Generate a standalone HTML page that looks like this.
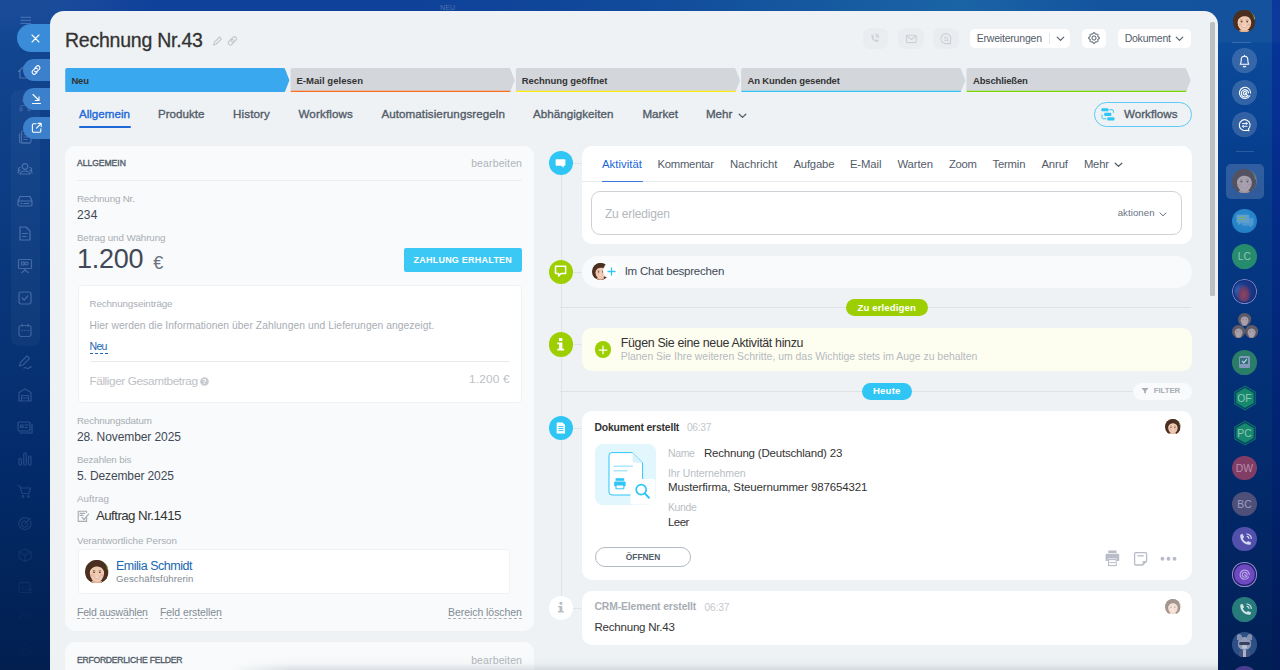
<!DOCTYPE html>
<html lang="de">
<head>
<meta charset="utf-8">
<title>Rechnung Nr.43</title>
<style>
*{box-sizing:border-box;margin:0;padding:0}
html,body{width:1280px;height:670px;overflow:hidden}
body{position:relative;font-family:"Liberation Sans",sans-serif;
 background:
  linear-gradient(180deg,#10409a 0%,#0d3a8e 30%,#08307c 60%,#05286c 100%);}
.abs{position:absolute}
.t{position:absolute;white-space:nowrap}
.lbar{position:absolute;left:0;top:0;width:50px;height:670px;background:linear-gradient(180deg,#1a4c9b 0%,#11458f 8%,#0b3a80 34%,#032b6a 69%,#022256 92%,#021f50 100%)}
.lgroup{position:absolute;left:11.2px;top:90.3px;width:28.6px;height:256px;border-radius:8px;background:rgba(255,255,255,.035)}
.sbtn{position:absolute;border-radius:14px 0 0 14px}
.lic{position:absolute;left:0;top:0}
.topstrip{position:absolute;left:0;top:0;width:1280px;height:26px;background:linear-gradient(90deg,#1a4c9b 0px,#1a4c9b 50px,#10419a 150px,#0f4199 420px,#114a9b 640px,#175ca1 860px,#1a64a5 960px,#14549f 1100px,#14529e 1218px,#14529e 1280px)}
.panel{position:absolute;left:50px;top:11px;width:1168px;height:659px;background:#eef2f4;border-radius:14px 14px 0 0}
.scroll{position:absolute;left:1210px;top:21.5px;width:4.7px;height:274.8px;background:#bdbfc1;border-radius:1.5px}
.scrolltrack{display:none}
.hbtn{position:absolute;top:28.5px;height:19.5px;background:#fff;border-radius:5px}
.hicon{position:absolute;top:27.8px;height:21px;width:25.4px;background:#eaedf0;border-radius:7px}
.stage{position:absolute;top:68px;height:24px}
.stage svg{display:block}
.card{position:absolute;background:#f8fafb;border-radius:10px}
.wcard{position:absolute;background:#fff;border-radius:10px}
.hr{position:absolute;height:1px;background:#e4e8eb}
.circle{position:absolute;width:24.6px;height:24.6px;border-radius:50%}
.dash{position:absolute;height:0;border-top:1px dashed #a9aeb5}
.face{position:absolute;border-radius:50%;overflow:hidden;background:#3a2418}
.rbar{position:absolute;left:1218px;top:0;width:62px;height:670px;background:linear-gradient(180deg,#14529e 0px,#14529e 42px,#0c4a9a 43px,#073f8f 150px,#053782 260px,#032f74 400px,#022766 520px,#021f54 670px)}
.rstrip{position:absolute;left:1271.5px;top:0;width:8.5px;height:670px;background:linear-gradient(180deg,rgba(0,20,150,.42),rgba(0,15,125,.34) 50%,rgba(0,10,90,.22))}
.rc{position:absolute;left:1232.2px;width:24.6px;height:24.6px;border-radius:50%;background:rgba(255,255,255,.17)}
.av{position:absolute;left:1232.2px;width:24.6px;height:24.6px;border-radius:50%;overflow:hidden;font-size:10.300px;text-align:center;line-height:25px;letter-spacing:.2px}
</style>
</head>
<body>
<div class="topstrip"></div>
<div class="lbar"></div>
<div class="lgroup"></div>
<!-- hamburger -->
<svg class="abs" style="left:19.5px;top:15.6px" width="12" height="9" viewBox="0 0 13 9" stroke="#5f86c4" stroke-width="1" opacity=".8"><path d="M.5 1 H12 M.5 4.3 H12 M.5 7.6 H12"/></svg>
<!-- sidebar icons (faded, line style) -->
<svg class="abs" style="left:0;top:0" width="50" height="670" viewBox="0 0 50 670" fill="none" stroke="#9bb8e6" stroke-width="1.2" stroke-linecap="round" stroke-linejoin="round">
 <g opacity="0.432" transform="translate(25 72)"><path d="M-6.500 -.5 l6 -5.500 l6 5.500 M-5 -1.500 v7.500 h10 v-7.500"/></g>
 <g opacity="0.24" transform="translate(25 104.500)"><circle cx="0" cy="-4" r="2.200"/><path d="M0 -1.500 v2.500 M-4 4 v-3 h8 v3"/><circle cx="-4" cy="5" r="1.300"/><circle cx="4" cy="5" r="1.300"/></g>
 <g opacity="0.36" transform="translate(25 137)"><path d="M-5.500 -3 v7.500 a1.500 1.500 0 0 0 1.500 1.500 h8.500"/><rect x="-3.500" y="-6" width="9.500" height="12" rx="1.500"/><path d="M-1 -2.500 h4.500 M-1 0 h4.500 M-1 2.500 h3"/></g>
 <g opacity="0.396" transform="translate(25 169)"><circle cx="0" cy="-2.500" r="2.800"/><path d="M-5 5 c0 -4 10 -4 10 0z"/><path d="M-5 -1.500 a2 2 0 0 0 -1 3.500 m-1 2 c0 -2 1 -2.500 2 -3 M5 -1.500 a2 2 0 0 1 1 3.500 m1 2 c0 -2 -1 -2.500 -2 -3"/></g>
 <g opacity="0.396" transform="translate(25 201)"><path d="M-7 0 l2 -4.500 h10 l2 4.500"/><rect x="-7" y="0" width="14" height="5" rx="1.500"/><path d="M-4 2.500 h1 M-1 2.500 h5"/></g>
 <g opacity="0.396" transform="translate(25 233.500)"><path d="M-5 -6.500 h6 l4 4 v9 h-10z"/><path d="M-2.500 0 h5 M-2.500 3 h3.500"/></g>
 <g opacity="0.36" transform="translate(25 265.500)"><rect x="-6.500" y="-6" width="13" height="9" rx="1"/><path d="M-3.500 -3.500 h2.500 v3 h-2.500z M1.500 -3.500 a1.500 1.500 0 1 1 0 3 a1.500 1.500 0 1 1 0 -3 M0 3 v1.500 M-3 7 l3 -2.500 l3 2.500"/></g>
 <g opacity="0.36" transform="translate(25 298)"><rect x="-6" y="-6" width="12" height="12" rx="2"/><path d="M-2.800 0 l2 2 l3.600 -4"/></g>
 <g opacity="0.324" transform="translate(25 330.500)"><rect x="-6" y="-5" width="12" height="11" rx="2"/><path d="M-3 -6.500 v2.500 M3 -6.500 v2.500 M-3 0 h.5 M0 0 h.5 M3 0 h.500"/></g>
 <g opacity="0.302" transform="translate(25 363)"><path d="M-5.500 3 l1 -3.500 l6.500 -6.500 l2.500 2.500 l-6.500 6.500z M-1 5 c2 -2 3 2 5 0 s2 -1 2.500 -1"/></g>
 <g opacity="0.259" transform="translate(25 395)"><path d="M-6 6 v-8.500 l6 -3.500 l6 3.500 v8.500z M-3.500 6 v-5.500 h7 v5.500 M-3.500 3 h7"/></g>
 <g opacity="0.259" transform="translate(25 427)"><rect x="-7" y="-5" width="12" height="9" rx="1.500"/><path d="M-4.500 -2 h2.500 v2.500 h-2.500z M0 -2 h3 M0 .5 h2 M-5 6 h12 v-8.500"/></g>
 <g opacity="0.216" transform="translate(25 459.500)"><rect x="-6" y="-1" width="2.500" height="6.500" rx="1"/><rect x="-1.250" y="-6.500" width="2.500" height="12" rx="1"/><rect x="3.500" y="-3.500" width="2.500" height="9" rx="1"/></g>
 <g opacity="0.18" transform="translate(25 491.500)"><path d="M-7 -5.500 h2 l2 7.500 h7 l1.500 -5.500 h-10"/><circle cx="-2" cy="5" r=".8"/><circle cx="3.500" cy="5" r=".8"/></g>
 <g opacity="0.144" transform="translate(25 523.500)"><path d="M3 -5 a6 6 0 1 0 2.500 3"/><path d="M1 -2 a3 3 0 1 0 1.500 2"/><path d="M0 0 l5 -5 m-1.500 0 h1.500 v1.500"/></g>
 <g opacity="0.101" transform="translate(25 555.500)"><path d="M0 -6.500 l6 3 v6.500 l-6 3 l-6 -3 v-6.500z M-6 -3.500 l6 3 l6 -3 M0 -.5 v6.500"/></g>
 <g opacity="0.072" transform="translate(25 587.500)"><rect x="-6" y="-5" width="11" height="10" rx="1.500"/><path d="M-3 -6.500 v2.500 M2 -6.500 v2.500 M-3 0 h2 M2 2 h5 M2 5 h5"/></g>
 <g opacity="0.0432" transform="translate(25 617)"><path d="M-5 2 a5 5 0 0 1 10 0"/></g>
 <g opacity="0.0288" transform="translate(25 650)"><circle r="5.500"/><circle r="2"/></g>
</svg>
<!-- slider buttons -->
<div class="sbtn" style="left:17px;top:24px;width:40px;height:27.5px;background:#3a8bd8"></div>
<svg class="abs" style="left:30px;top:32.500px" width="11" height="11" viewBox="0 0 11 11" stroke="#fff" stroke-width="1.100" stroke-linecap="round"><path d="M2 2 L9 9 M9 2 L2 9"/></svg>
<div class="sbtn" style="left:22.500px;top:59px;width:35px;height:21.500px;background:#3c7fcb;border-radius:11px 0 0 11px"></div>
<svg class="abs" style="left:30px;top:63.500px" width="12" height="12" viewBox="0 0 12 12" fill="none" stroke="#fff" stroke-width="1.100" stroke-linecap="round"><path d="M5 3.800 l1.400 -1.400 a2 2 0 0 1 2.900 2.900 l-1.900 1.900 a2 2 0 0 1 -2.800 0"/><path d="M7 8.200 l-1.400 1.400 a2 2 0 0 1 -2.900 -2.900 l1.900 -1.900 a2 2 0 0 1 2.800 0"/></svg>
<div class="sbtn" style="left:22.500px;top:88px;width:35px;height:21.500px;background:#3c7fcb;border-radius:11px 0 0 11px"></div>
<svg class="abs" style="left:30.500px;top:93px" width="11" height="12" viewBox="0 0 11 12" fill="none" stroke="#fff" stroke-width="1.100" stroke-linecap="round" stroke-linejoin="round"><path d="M2 1.500 L8 7.500 M4.200 7.500 H8 V3.700 M1.500 10.500 H9.500"/></svg>
<div class="sbtn" style="left:22.500px;top:117px;width:35px;height:22px;background:#3c7fcb;border-radius:11px 0 0 11px"></div>
<svg class="abs" style="left:30.500px;top:122px" width="12" height="12" viewBox="0 0 12 12" fill="none" stroke="#fff" stroke-width="1.100" stroke-linecap="round" stroke-linejoin="round"><path d="M5 1.800 H2.600 a1.200 1.200 0 0 0 -1.200 1.200 V9 a1.200 1.200 0 0 0 1.200 1.200 H8.600 a1.200 1.200 0 0 0 1.200 -1.200 V6.800"/><path d="M5.500 6.200 L10 1.600 M7 1.400 H10.200 V4.600"/></svg>
<div class="t" style="left:440px;top:3.5px;font-size:7px;line-height:8px;color:rgba(255,255,255,.28);letter-spacing:.2px">NEU</div>
<div class="panel"></div>
<div class="scrolltrack"></div>
<div class="scroll"></div>

<!-- title icons -->
<svg class="abs" style="left:212px;top:34px" width="28" height="13" viewBox="0 0 28 13" fill="none" stroke="#c3c7cc" stroke-width="1.1" stroke-linecap="round" stroke-linejoin="round">
 <path d="M1.6 10.9 L2.4 8.2 L7.6 3 L9.4 4.8 L4.2 10 Z"/>
 <g transform="translate(20.4 6.8) rotate(-45)"><rect x="-4.9" y="-2.1" width="6.1" height="4.2" rx="2.1"/><rect x="-1.2" y="-2.1" width="6.1" height="4.2" rx="2.1"/></g>
</svg>

<!-- header right buttons -->
<div class="hicon" style="left:862.9px"></div>
<div class="hicon" style="left:898.2px"></div>
<div class="hicon" style="left:933.4px"></div>
<svg class="abs" style="left:868.8px;top:32.6px" width="84" height="12" viewBox="0 0 84 12" fill="none" stroke="#cdd1d6" stroke-width="1.1" stroke-linecap="round" stroke-linejoin="round">
 <path d="M2.400 2.200 l1.500 -0.600 l1.100 2.200 l-0.900 0.900 c0.500 1.200 1.300 2 2.500 2.500 l0.900 -0.900 l2.200 1.100 l-0.600 1.500 c-3.600 0.500 -7.200 -3.100 -6.700 -6.700z" fill="#cdd1d6" stroke="none"/>
 <path d="M6.800 1.400 a3.400 3.400 0 0 1 2.900 2.900 M7 3.200 a1.600 1.600 0 0 1 1.100 1.100"/>
 <rect x="37.400" y="2.200" width="9.800" height="7.400" rx="1"/><path d="M37.700 2.800 l4.600 3.700 l4.600 -3.700"/>
 <path d="M76.900 10.600 a5 5 0 1 1 4.300 -2.400 l0.500 2.400 z"/><path d="M75.300 4.700 h4 m-3 -1 l-1 1 l1 1 M79.300 7.300 h-4 m3 -1 l1 1 l-1 1" stroke-width=".9"/>
</svg>
<div class="hbtn" style="left:969.6px;width:100.9px"></div>
<div class="abs" style="left:1049px;top:32.5px;width:1px;height:11px;background:#e4e7ea"></div>
<svg class="abs" style="left:1056px;top:36px" width="9" height="6" viewBox="0 0 9 6" fill="none" stroke="#535c69" stroke-width="1.1" stroke-linecap="round" stroke-linejoin="round"><path d="M1.2 1.2 L4.5 4.4 L7.8 1.2"/></svg>
<div class="hbtn" style="left:1082.1px;width:23.6px"></div>
<svg class="abs" style="left:1088px;top:32.2px" width="12" height="12" viewBox="0 0 12 12" fill="none" stroke="#535c69" stroke-width="1" stroke-linejoin="round"><circle cx="6" cy="6" r="2.1"/><path d="M5.13 0.77 L6.87 0.77 L7.03 1.88 L8.19 2.36 L9.08 1.69 L10.31 2.92 L9.64 3.81 L10.12 4.97 L11.23 5.13 L11.23 6.87 L10.12 7.03 L9.64 8.19 L10.31 9.08 L9.08 10.31 L8.19 9.64 L7.03 10.12 L6.87 11.23 L5.13 11.23 L4.97 10.12 L3.81 9.64 L2.92 10.31 L1.69 9.08 L2.36 8.19 L1.88 7.03 L0.77 6.87 L0.77 5.13 L1.88 4.97 L2.36 3.81 L1.69 2.92 L2.92 1.69 L3.81 2.36 L4.97 1.88z"/></svg>
<div class="hbtn" style="left:1117.5px;width:73px"></div>
<svg class="abs" style="left:1174.5px;top:36px" width="9" height="6" viewBox="0 0 9 6" fill="none" stroke="#535c69" stroke-width="1.1" stroke-linecap="round" stroke-linejoin="round"><path d="M1.2 1.2 L4.5 4.4 L7.8 1.2"/></svg>

<!-- stages -->
<svg class="abs" style="left:65px;top:67.7px" width="1127" height="24.4" viewBox="0 0 1127 24.4">
 <path d="M2.0 0 H218.1 Q219.6 0 220.1 1.4 L224.3 12.2 L220.1 23.0 Q219.6 24.4 218.1 24.4 H2.0 a2 2 0 0 1 -2 -2 V2 a2 2 0 0 1 2 -2z" fill="#39a8ef"/>
 <path d="M227.4 0 H443.5 Q445.0 0 445.5 1.4 L449.7 12.2 L445.5 23.0 Q445.0 24.4 443.5 24.4 H227.4 a2 2 0 0 1 -2 -2 V2 a2 2 0 0 1 2 -2z" fill="#d3d7dc"/>
 <path d="M225.4 22.799999999999997 H445.6 L445.5 23.0 Q445.0 24.4 443.5 24.4 H227.4 a2 2 0 0 1 -2 -1.6z" fill="#ff6f1e"/>
 <path d="M452.8 0 H668.9 Q670.4 0 670.9 1.4 L675.1 12.2 L670.9 23.0 Q670.4 24.4 668.9 24.4 H452.8 a2 2 0 0 1 -2 -2 V2 a2 2 0 0 1 2 -2z" fill="#d3d7dc"/>
 <path d="M450.8 22.799999999999997 H671.0 L670.9 23.0 Q670.4 24.4 668.9 24.4 H452.8 a2 2 0 0 1 -2 -1.6z" fill="#ffee10"/>
 <path d="M678.2 0 H894.3 Q895.8 0 896.3 1.4 L900.5 12.2 L896.3 23.0 Q895.8 24.4 894.3 24.4 H678.2 a2 2 0 0 1 -2 -2 V2 a2 2 0 0 1 2 -2z" fill="#d3d7dc"/>
 <path d="M676.2 22.799999999999997 H896.4 L896.3 23.0 Q895.8 24.4 894.3 24.4 H678.2 a2 2 0 0 1 -2 -1.6z" fill="#2fc6f6"/>
 <path d="M903.6 0 H1119.7 Q1121.2 0 1121.7 1.4 L1125.9 12.2 L1121.7 23.0 Q1121.2 24.4 1119.7 24.4 H903.6 a2 2 0 0 1 -2 -2 V2 a2 2 0 0 1 2 -2z" fill="#d3d7dc"/>
 <path d="M901.6 22.799999999999997 H1121.8 L1121.7 23.0 Q1121.2 24.4 1119.7 24.4 H903.6 a2 2 0 0 1 -2 -1.6z" fill="#7bd500"/>
</svg>

<!-- tabs underline + chevron -->
<div class="abs" style="left:79px;top:126.3px;width:51.5px;height:1.7px;background:#2067d8;border-radius:1px"></div>
<svg class="abs" style="left:738px;top:112.5px" width="9" height="6" viewBox="0 0 9 6" fill="none" stroke="#535c69" stroke-width="1.3" stroke-linecap="round" stroke-linejoin="round"><path d="M1.2 1.2 L4.5 4.4 L7.8 1.2"/></svg>
<!-- workflows button -->
<div class="abs" style="left:1094px;top:101.5px;width:97.5px;height:25px;border:1px solid #5ccbf5;border-radius:12.5px"></div>
<svg class="abs" style="left:1100px;top:107px" width="16" height="15" viewBox="0 0 16 15" fill="#2fc6f6">
 <rect x="1.3" y="1.2" width="7.2" height="3.1" rx=".9"/><rect x="4.2" y="5.8" width="7.2" height="3.1" rx=".9"/><rect x="7.2" y="10.2" width="7.3" height="3.3" rx=".9"/>
 <path d="M9.8 2.7 H12 a1.4 1.4 0 0 1 1.4 1.4 V5.4 M2 8 V10.400 a1.400 1.400 0 0 0 1.400 1.400 H5.800" fill="none" stroke="#2fc6f6" stroke-width="1" stroke-linecap="round"/>
</svg>

<!-- LEFT CARD -->
<div class="card" style="left:65px;top:146px;width:468.8px;height:484.5px"></div>
<div class="hr" style="left:77px;top:180px;width:445px;background:#eceff2"></div>
<div class="abs" style="left:403.5px;top:247.5px;width:118.5px;height:24.5px;background:#3bc8f5;border-radius:2px"></div>
<div class="abs" style="left:77.5px;top:284.5px;width:444px;height:118.5px;background:#fff;border:1px solid #f0f2f4;border-radius:4px"></div>
<div class="dash" style="left:89.5px;top:352.5px;width:18px;border-color:#2066b0"></div>
<div class="hr" style="left:89.5px;top:361px;width:420px;background:#e8ebee"></div>
<svg class="abs" style="left:199.5px;top:376.5px" width="9" height="9" viewBox="0 0 9 9"><circle cx="4.5" cy="4.5" r="4.3" fill="#c6cacf"/><text x="4.5" y="7.2" font-size="7" font-weight="bold" fill="#fff" text-anchor="middle" font-family="Liberation Sans, sans-serif">?</text></svg>
<!-- order icon -->
<svg class="abs" style="left:76.5px;top:509.5px" width="13" height="13" viewBox="0 0 13 13" fill="none" stroke="#a8adb4" stroke-width="1.1" stroke-linecap="round" stroke-linejoin="round">
 <path d="M9.6 7.6 V11.4 H1.2 V1.2 H9.6 V2.6"/><path d="M3 3.4 h4.6 M3 5.4 h3"/><path d="M5 7.4 l2 2.2 l4.6 -5.4" stroke-width="1.3"/>
</svg>
<!-- user box -->
<div class="abs" style="left:77.5px;top:549px;width:432px;height:44.5px;background:#fff;border:1px solid #f0f2f4;border-radius:3px"></div>
<svg class="abs" style="left:85.0px;top:559.5px;opacity:1.0" width="23.5" height="23.5" viewBox="0 0 24 24"><clipPath id="fc1409"><circle cx="12" cy="12" r="12"/></clipPath><g clip-path="url(#fc1409)"><rect width="24" height="24" fill="#4b2f20"/><path d="M17.500 0 h6.500 v10 h-3z" fill="#8aa83c"/><path d="M1 24 V11 C1 3 6.500 0 12.500 0 C19.500 0 23 5 22.500 12 V24z" fill="#4b2f20"/><path d="M6 24 c.5 -3 2.500 -4 6 -4 s5.500 1 6 4z" fill="#e2b096"/><ellipse cx="12.200" cy="13.300" rx="7.300" ry="9" fill="#f0cbb3"/><path d="M4 13 C3.500 5.500 8 2.500 13 3 C18.500 3.500 20.800 7.500 20.300 13.500 C19.200 10 17.500 7.500 14 6.800 C10 6.200 6 8 4 13z" fill="#4b2f20"/><ellipse cx="9.200" cy="12.600" rx="1.100" ry=".8" fill="#5b3a2a"/><ellipse cx="15.200" cy="12.600" rx="1.100" ry=".8" fill="#5b3a2a"/><path d="M7.800 11 q1.400 -.8 2.800 0 M13.800 11 q1.400 -.8 2.800 0" stroke="#6b4632" stroke-width=".5" fill="none"/><path d="M8.800 17 q3.400 1.400 6.800 0 q-3.400 3.600 -6.800 0z" fill="#fff"/><path d="M8.800 17 q3.400 3.600 6.800 0" fill="none" stroke="#c9806e" stroke-width=".6"/><ellipse cx="7.500" cy="15.500" rx="1.600" ry="1.100" fill="#e8a594" opacity=".6"/><ellipse cx="17" cy="15.500" rx="1.600" ry="1.100" fill="#e8a594" opacity=".6"/></g></svg>
<div class="dash" style="left:77px;top:617.6px;width:71px"></div>
<div class="dash" style="left:160px;top:617.6px;width:62px"></div>
<div class="dash" style="left:448px;top:617.6px;width:74px"></div>
<!-- second card -->
<div class="card" style="left:65px;top:642.4px;width:468.8px;height:40px"></div>

<!-- TIMELINE -->
<div class="abs" style="left:561px;top:163px;width:1px;height:435px;background:#dfe3e6"></div>
<div class="hr" style="left:560px;top:307px;width:631px;background:#dfe3e6"></div>
<div class="hr" style="left:560px;top:390.8px;width:631px;background:#dfe3e6"></div>
<div class="hr" style="left:571px;top:163px;width:12px;background:#dfe3e6"></div>
<div class="hr" style="left:571px;top:271.5px;width:12px;background:#dfe3e6"></div>
<div class="hr" style="left:571px;top:344px;width:12px;background:#dfe3e6"></div>
<div class="hr" style="left:571px;top:428px;width:12px;background:#dfe3e6"></div>
<div class="hr" style="left:571px;top:607.5px;width:12px;background:#dfe3e6"></div>

<!-- activity card -->
<div class="wcard" style="left:582.3px;top:146px;width:609.6px;height:97.5px"></div>
<div class="hr" style="left:582.3px;top:181px;width:609.6px;background:#e6eaed"></div>
<div class="abs" style="left:602px;top:180.8px;width:40.5px;height:1.4px;background:#3b7be0"></div>
<div class="abs" style="left:591.4px;top:191px;width:591px;height:44px;border:1px solid #cdd2d7;border-radius:9px;background:#fff"></div>
<svg class="abs" style="left:1114px;top:161.5px" width="9" height="6" viewBox="0 0 9 6" fill="none" stroke="#535c69" stroke-width="1.3" stroke-linecap="round" stroke-linejoin="round"><path d="M1.2 1.2 L4.5 4.4 L7.8 1.2"/></svg>
<svg class="abs" style="left:1158.5px;top:211.5px" width="8" height="5" viewBox="0 0 8 5" fill="none" stroke="#6a737f" stroke-width="1" stroke-linecap="round" stroke-linejoin="round"><path d="M1 1 L4 3.8 L7 1"/></svg>
<div class="circle" style="left:548.6px;top:150.9px;background:#2fc6f6"></div>
<svg class="abs" style="left:555.2px;top:157.5px" width="11" height="11" viewBox="0 0 11 11"><path d="M1.4 1.2 h8.2 a.8 .8 0 0 1 .8 .8 v5 a.8 .8 0 0 1 -.8 .8 H8.6 v2 L6.2 7.8 H1.4 a.8 .8 0 0 1 -.8 -.8 V2 a.8 .8 0 0 1 .8 -.8z" fill="#fff"/></svg>

<!-- chat row -->
<div class="abs" style="left:582.3px;top:255.5px;width:609.6px;height:32px;border-radius:16px;background:#f8fafb"></div>
<div class="circle" style="left:548.6px;top:259.8px;background:#9dcf00"></div>
<svg class="abs" style="left:554.4px;top:265.4px" width="13.2" height="14.3" viewBox="0 0 12 13" fill="none" stroke="#fff" stroke-width="1.4" stroke-linejoin="round"><path d="M1.4 1.2 h9.2 v6.6 H6.4 L4.2 10 V7.8 H1.4z"/></svg>
<svg class="abs" style="left:591.5px;top:262.7px;opacity:1.0" width="17.0" height="17.0" viewBox="0 0 24 24"><clipPath id="fc6177"><circle cx="12" cy="12" r="12"/></clipPath><g clip-path="url(#fc6177)"><rect width="24" height="24" fill="#4b2f20"/><path d="M17.500 0 h6.500 v10 h-3z" fill="#8aa83c"/><path d="M1 24 V11 C1 3 6.500 0 12.500 0 C19.500 0 23 5 22.500 12 V24z" fill="#4b2f20"/><path d="M6 24 c.5 -3 2.500 -4 6 -4 s5.500 1 6 4z" fill="#e2b096"/><ellipse cx="12.200" cy="13.300" rx="7.300" ry="9" fill="#f0cbb3"/><path d="M4 13 C3.500 5.500 8 2.500 13 3 C18.500 3.500 20.800 7.500 20.300 13.500 C19.200 10 17.500 7.500 14 6.800 C10 6.200 6 8 4 13z" fill="#4b2f20"/><ellipse cx="9.200" cy="12.600" rx="1.100" ry=".8" fill="#5b3a2a"/><ellipse cx="15.200" cy="12.600" rx="1.100" ry=".8" fill="#5b3a2a"/><path d="M7.800 11 q1.400 -.8 2.800 0 M13.800 11 q1.400 -.8 2.800 0" stroke="#6b4632" stroke-width=".5" fill="none"/><path d="M8.800 17 q3.400 1.400 6.800 0 q-3.400 3.600 -6.800 0z" fill="#fff"/><path d="M8.800 17 q3.400 3.600 6.800 0" fill="none" stroke="#c9806e" stroke-width=".6"/><ellipse cx="7.500" cy="15.500" rx="1.600" ry="1.100" fill="#e8a594" opacity=".6"/><ellipse cx="17" cy="15.500" rx="1.600" ry="1.100" fill="#e8a594" opacity=".6"/></g></svg>
<div class="abs" style="left:603px;top:263px;width:16px;height:16px;border-radius:50%;background:#fff"></div>
<svg class="abs" style="left:606.5px;top:266.5px" width="9" height="9" viewBox="0 0 9 9" stroke="#2fc6f6" stroke-width="1.3" stroke-linecap="round"><path d="M4.5 1 V8 M1 4.5 H8"/></svg>

<!-- pills -->
<div class="abs" style="left:846px;top:299.2px;width:81.8px;height:17px;border-radius:8.5px;background:#9dcf00"></div>
<div class="abs" style="left:861.8px;top:383px;width:50.4px;height:16.8px;border-radius:8.4px;background:#2fc6f6"></div>
<div class="abs" style="left:1132.6px;top:382.8px;width:59px;height:16.8px;border-radius:8.4px;background:#f8fafb"></div>
<svg class="abs" style="left:1141.3px;top:387.3px" width="8" height="8" viewBox="0 0 9 8"><path d="M.4 .6 H8.6 L5.5 4 V7.2 L3.5 6 V4z" fill="#a8adb4"/></svg>

<!-- yellow card -->
<div class="abs" style="left:582.3px;top:327.6px;width:609.6px;height:43.7px;border-radius:10px;background:#fefef0"></div>
<div class="circle" style="left:548.6px;top:332.3px;background:#9dcf00"></div>
<svg class="abs" style="left:556.1px;top:337px" width="9.6" height="15" viewBox="0 0 9 14" fill="#fff"><rect x="2.8" y="0.8" width="3.2" height="3" rx=".4"/><path d="M1.2 5.2 H6 V11 H7.6 V12.6 H1.2 V11 H2.8 V6.8 H1.2z"/></svg>
<div class="abs" style="left:594.7px;top:341.3px;width:16.5px;height:16.5px;border-radius:50%;background:#9dcf00"></div>
<svg class="abs" style="left:597.95px;top:344.55px" width="10" height="10" viewBox="0 0 10 10" stroke="#fff" stroke-width="1.25" stroke-linecap="round"><path d="M5 1.2 V8.8 M1.2 5 H8.8"/></svg>

<!-- document card -->
<div class="wcard" style="left:582.3px;top:411px;width:609.6px;height:168.7px"></div>
<div class="circle" style="left:548.6px;top:415.8px;background:#2fc6f6"></div>
<svg class="abs" style="left:555.9px;top:422px" width="10" height="12" viewBox="0 0 10 12"><path d="M1.2 .6 H6.6 L9 3 V11 a.5 .5 0 0 1 -.5 .5 H1.2 a.5 .5 0 0 1 -.5 -.5 V1.1 a.5 .5 0 0 1 .5 -.5z" fill="#fff"/><path d="M2.4 4.6 h5 M2.4 6.6 h5 M2.4 8.6 h5" stroke="#2fc6f6" stroke-width="1"/></svg>
<div class="abs" style="left:594.5px;top:443.8px;width:61px;height:61px;border-radius:8px;background:#e2f6fd"></div>
<svg class="abs" style="left:594.5px;top:443.8px" width="61" height="61" viewBox="0 0 61 61" fill="none">
 <path d="M17 8.6 H37.5 L47.6 18.8 V48 a3 3 0 0 1 -3 3 H17 a3 3 0 0 1 -3 -3 V11.6 a3 3 0 0 1 3 -3z" fill="#fff" stroke="#2fc6f6" stroke-width="1"/>
 <path d="M37.5 8.6 V16 a2.8 2.8 0 0 0 2.8 2.8 H47.6z" fill="#d9f3fc"/>
 <path d="M18.4 22.2 h19.4" stroke="#a5e5fa" stroke-width="1.4"/><path d="M18.4 26.8 h14" stroke="#a5e5fa" stroke-width="1.4"/>
 <rect x="20.6" y="34.2" width="8.6" height="2.6" fill="#2fc6f6"/><rect x="19.2" y="37.4" width="11.4" height="5" rx=".8" fill="#2fc6f6"/><rect x="21" y="41" width="7.8" height="3.8" fill="#fff" stroke="#2fc6f6" stroke-width="1"/>
 <path d="M42.5 35 H58.4 a2 2 0 0 1 2 2 V58.400 a2 2 0 0 1 -2 2 H37.500 a2 2 0 0 1 -2 -2 V42 a7 7 0 0 1 7 -7z" fill="#fff"/>
 <circle cx="46.2" cy="45.6" r="5" stroke="#2fc6f6" stroke-width="1.7"/><path d="M50 49.6 L54 53.8" stroke="#2fc6f6" stroke-width="2" stroke-linecap="round"/>
</svg>
<div class="abs" style="left:594.6px;top:547.3px;width:96.8px;height:19.8px;border:1px solid #b3bac1;border-radius:10px"></div>
<!-- card action icons -->
<svg class="abs" style="left:1105.2px;top:549.7px" width="74" height="17" viewBox="0 0 74 17" fill="#b8bcc6">
 <rect x="3.2" y=".6" width="8.4" height="2.4" rx=".5"/><path d="M1.8 3.8 H13 a1.2 1.2 0 0 1 1.2 1.2 V11 H12 V8.6 H2.8 V11 H.6 V5 a1.2 1.2 0 0 1 1.2 -1.2z"/><rect x="3.6" y="9.6" width="7.6" height="6" fill="none" stroke="#b8bcc6" stroke-width="1.1"/><path d="M4.6 12.6 h5.6" stroke="#b8bcc6" stroke-width="1"/>
 <path d="M30.6 2.6 H40.6 a1 1 0 0 1 1 1 V11 L37.6 15 H30.6 a1 1 0 0 1 -1 -1 V3.6 a1 1 0 0 1 1 -1z" fill="none" stroke="#b8bcc6" stroke-width="1.3"/><path d="M32.4 5.8 h6.4" stroke="#b8bcc6" stroke-width="1.3"/><path d="M41.6 11 H38.4 a.8 .8 0 0 0 -.8 .8 V15z"/>
 <circle cx="57.5" cy="8.800" r="1.950"/><circle cx="63.500" cy="8.800" r="1.950"/><circle cx="69.500" cy="8.800" r="1.950"/>
</svg>
<svg class="abs" style="left:1165.1px;top:418.9px;opacity:1.0" width="15.6" height="15.6" viewBox="0 0 24 24"><clipPath id="fc12069"><circle cx="12" cy="12" r="12"/></clipPath><g clip-path="url(#fc12069)"><rect width="24" height="24" fill="#4b2f20"/><path d="M17.500 0 h6.500 v10 h-3z" fill="#8aa83c"/><path d="M1 24 V11 C1 3 6.500 0 12.500 0 C19.500 0 23 5 22.500 12 V24z" fill="#4b2f20"/><path d="M6 24 c.5 -3 2.500 -4 6 -4 s5.500 1 6 4z" fill="#e2b096"/><ellipse cx="12.200" cy="13.300" rx="7.300" ry="9" fill="#f0cbb3"/><path d="M4 13 C3.500 5.500 8 2.500 13 3 C18.500 3.500 20.800 7.500 20.300 13.500 C19.200 10 17.500 7.500 14 6.800 C10 6.200 6 8 4 13z" fill="#4b2f20"/><ellipse cx="9.200" cy="12.600" rx="1.100" ry=".8" fill="#5b3a2a"/><ellipse cx="15.200" cy="12.600" rx="1.100" ry=".8" fill="#5b3a2a"/><path d="M7.800 11 q1.400 -.8 2.800 0 M13.800 11 q1.400 -.8 2.800 0" stroke="#6b4632" stroke-width=".5" fill="none"/><path d="M8.800 17 q3.400 1.400 6.800 0 q-3.400 3.600 -6.800 0z" fill="#fff"/><path d="M8.800 17 q3.400 3.600 6.800 0" fill="none" stroke="#c9806e" stroke-width=".6"/><ellipse cx="7.500" cy="15.500" rx="1.600" ry="1.100" fill="#e8a594" opacity=".6"/><ellipse cx="17" cy="15.500" rx="1.600" ry="1.100" fill="#e8a594" opacity=".6"/></g></svg>

<!-- crm card -->
<div class="wcard" style="left:582.3px;top:591.3px;width:609.6px;height:53.6px"></div>
<div class="circle" style="left:548.6px;top:595.6px;background:#fff"></div>
<svg class="abs" style="left:556.7px;top:601px" width="8" height="13" viewBox="0 0 9 14" fill="#b9bec4"><rect x="2.8" y="0.8" width="3.2" height="3" rx=".4"/><path d="M1.2 5.2 H6 V11 H7.6 V12.6 H1.2 V11 H2.8 V6.8 H1.2z"/></svg>
<svg class="abs" style="left:1165.1px;top:598.8px;opacity:0.5" width="15.6" height="15.6" viewBox="0 0 24 24"><clipPath id="fc12249"><circle cx="12" cy="12" r="12"/></clipPath><g clip-path="url(#fc12249)"><rect width="24" height="24" fill="#4b2f20"/><path d="M17.500 0 h6.500 v10 h-3z" fill="#8aa83c"/><path d="M1 24 V11 C1 3 6.500 0 12.500 0 C19.500 0 23 5 22.500 12 V24z" fill="#4b2f20"/><path d="M6 24 c.5 -3 2.500 -4 6 -4 s5.500 1 6 4z" fill="#e2b096"/><ellipse cx="12.200" cy="13.300" rx="7.300" ry="9" fill="#f0cbb3"/><path d="M4 13 C3.500 5.500 8 2.500 13 3 C18.500 3.500 20.800 7.500 20.300 13.500 C19.200 10 17.500 7.500 14 6.800 C10 6.200 6 8 4 13z" fill="#4b2f20"/><ellipse cx="9.200" cy="12.600" rx="1.100" ry=".8" fill="#5b3a2a"/><ellipse cx="15.200" cy="12.600" rx="1.100" ry=".8" fill="#5b3a2a"/><path d="M7.800 11 q1.400 -.8 2.800 0 M13.800 11 q1.400 -.8 2.800 0" stroke="#6b4632" stroke-width=".5" fill="none"/><path d="M8.800 17 q3.400 1.400 6.800 0 q-3.400 3.600 -6.800 0z" fill="#fff"/><path d="M8.800 17 q3.400 3.600 6.800 0" fill="none" stroke="#c9806e" stroke-width=".6"/><ellipse cx="7.500" cy="15.500" rx="1.600" ry="1.100" fill="#e8a594" opacity=".6"/><ellipse cx="17" cy="15.500" rx="1.600" ry="1.100" fill="#e8a594" opacity=".6"/></g></svg>
<!-- bottom fade -->
<div class="abs" style="left:230px;top:655px;width:988px;height:15px;background:linear-gradient(180deg,rgba(150,160,172,0),rgba(150,160,172,.04) 55%,rgba(140,150,162,.26));-webkit-mask-image:linear-gradient(90deg,transparent,#000 60px);mask-image:linear-gradient(90deg,transparent,#000 60px)"></div>
<span class="t" style="left:64.95px;top:27.5px;font-size:19.5px;line-height:25px;font-weight:normal;color:#333;letter-spacing:-0.23px;-webkit-text-stroke:.3px;">Rechnung Nr.43</span>
<span class="t" style="left:976.70px;top:31.1px;font-size:10.5px;line-height:14px;font-weight:normal;color:#535c69;letter-spacing:-0.20px;">Erweiterungen</span>
<span class="t" style="left:1124.65px;top:31.0px;font-size:10.5px;line-height:14px;font-weight:normal;color:#535c69;letter-spacing:-0.22px;">Dokument</span>
<span class="t" style="left:71.45px;top:74.5px;font-size:9.5px;line-height:12px;font-weight:bold;color:#333;letter-spacing:-0.22px;">Neu</span>
<span class="t" style="left:296.45px;top:74.5px;font-size:9.5px;line-height:12px;font-weight:bold;color:#333;letter-spacing:0.04px;">E-Mail gelesen</span>
<span class="t" style="left:521.70px;top:74.5px;font-size:9.5px;line-height:12px;font-weight:bold;color:#333;letter-spacing:-0.05px;">Rechnung geöffnet</span>
<span class="t" style="left:747.45px;top:74.5px;font-size:9.5px;line-height:12px;font-weight:bold;color:#333;letter-spacing:-0.15px;">An Kunden gesendet</span>
<span class="t" style="left:972.95px;top:74.5px;font-size:9.5px;line-height:12px;font-weight:bold;color:#333;letter-spacing:-0.15px;">Abschließen</span>
<span class="t" style="left:78.95px;top:106.3px;font-size:11.6px;line-height:15px;font-weight:normal;color:#2067d8;letter-spacing:0.01px;-webkit-text-stroke:.35px;">Allgemein</span>
<span class="t" style="left:157.95px;top:106.3px;font-size:11.6px;line-height:15px;font-weight:normal;color:#535c69;letter-spacing:0.01px;-webkit-text-stroke:.35px;">Produkte</span>
<span class="t" style="left:232.95px;top:106.3px;font-size:11.6px;line-height:15px;font-weight:normal;color:#535c69;letter-spacing:0.15px;-webkit-text-stroke:.35px;">History</span>
<span class="t" style="left:298.45px;top:106.3px;font-size:11.6px;line-height:15px;font-weight:normal;color:#535c69;letter-spacing:0.15px;-webkit-text-stroke:.35px;">Workflows</span>
<span class="t" style="left:381.45px;top:106.3px;font-size:11.6px;line-height:15px;font-weight:normal;color:#535c69;letter-spacing:0.08px;-webkit-text-stroke:.35px;">Automatisierungsregeln</span>
<span class="t" style="left:532.95px;top:106.3px;font-size:11.6px;line-height:15px;font-weight:normal;color:#535c69;letter-spacing:0.04px;-webkit-text-stroke:.35px;">Abhängigkeiten</span>
<span class="t" style="left:642.45px;top:106.3px;font-size:11.6px;line-height:15px;font-weight:normal;color:#535c69;letter-spacing:0.01px;-webkit-text-stroke:.35px;">Market</span>
<span class="t" style="left:705.95px;top:106.3px;font-size:11.6px;line-height:15px;font-weight:normal;color:#535c69;letter-spacing:0.02px;-webkit-text-stroke:.35px;">Mehr</span>
<span class="t" style="left:1123.95px;top:106.3px;font-size:11.6px;line-height:15px;font-weight:normal;color:#535c69;letter-spacing:0.03px;-webkit-text-stroke:.35px;">Workflows</span>
<span class="t" style="left:76.95px;top:157.8px;font-size:8.6px;line-height:11px;font-weight:normal;color:#535c69;letter-spacing:-0.03px;-webkit-text-stroke:.35px;">ALLGEMEIN</span>
<span class="t" style="left:471.15px;top:156.3px;font-size:10.5px;line-height:14px;font-weight:normal;color:#b0b4b9;letter-spacing:0.13px;">bearbeiten</span>
<span class="t" style="left:76.95px;top:192.0px;font-size:9.8px;line-height:13px;font-weight:normal;color:#a8adb4;letter-spacing:-0.18px;">Rechnung Nr.</span>
<span class="t" style="left:76.95px;top:206.9px;font-size:12px;line-height:16px;font-weight:normal;color:#424956;letter-spacing:0.24px;">234</span>
<span class="t" style="left:76.95px;top:231.0px;font-size:9.8px;line-height:13px;font-weight:normal;color:#a8adb4;letter-spacing:-0.11px;">Betrag und Währung</span>
<span class="t" style="left:76.95px;top:241.5px;font-size:27px;line-height:35px;font-weight:normal;color:#424956;letter-spacing:-0.27px;">1.200</span>
<span class="t" style="left:153.25px;top:251.5px;font-size:18px;line-height:23px;font-weight:normal;color:#6a737f;letter-spacing:-0.01px;">€</span>
<span class="t" style="left:413.45px;top:254.0px;font-size:9px;line-height:12px;font-weight:bold;color:#fff;letter-spacing:0.24px;">ZAHLUNG ERHALTEN</span>
<span class="t" style="left:89.45px;top:297.3px;font-size:9.8px;line-height:13px;font-weight:normal;color:#a8adb4;letter-spacing:-0.12px;">Rechnungseinträge</span>
<span class="t" style="left:89.45px;top:318.5px;font-size:10.3px;line-height:13px;font-weight:normal;color:#a8adb4;letter-spacing:0.06px;">Hier werden die Informationen über Zahlungen und Lieferungen angezeigt.</span>
<span class="t" style="left:89.45px;top:339.3px;font-size:10.5px;line-height:14px;font-weight:normal;color:#2066b0;letter-spacing:-0.63px;">Neu</span>
<span class="t" style="left:89.45px;top:373.5px;font-size:11.8px;line-height:15px;font-weight:normal;color:#bdc1c6;letter-spacing:-0.41px;">Fälliger Gesamtbetrag</span>
<span class="t" style="left:468.95px;top:372.2px;font-size:11.8px;line-height:15px;font-weight:normal;color:#bdc1c6;letter-spacing:0.19px;">1.200 €</span>
<span class="t" style="left:76.95px;top:413.5px;font-size:9.8px;line-height:13px;font-weight:normal;color:#a8adb4;letter-spacing:-0.14px;">Rechnungsdatum</span>
<span class="t" style="left:76.95px;top:428.8px;font-size:12px;line-height:16px;font-weight:normal;color:#424956;letter-spacing:-0.09px;">28. November 2025</span>
<span class="t" style="left:76.95px;top:453.0px;font-size:9.8px;line-height:13px;font-weight:normal;color:#a8adb4;letter-spacing:-0.15px;">Bezahlen bis</span>
<span class="t" style="left:76.95px;top:467.5px;font-size:12px;line-height:16px;font-weight:normal;color:#424956;letter-spacing:-0.12px;">5. Dezember 2025</span>
<span class="t" style="left:76.95px;top:491.7px;font-size:9.8px;line-height:13px;font-weight:normal;color:#a8adb4;letter-spacing:0.07px;">Auftrag</span>
<span class="t" style="left:95.95px;top:507.0px;font-size:13.3px;line-height:17px;font-weight:normal;color:#333;letter-spacing:-0.55px;">Auftrag Nr.1415</span>
<span class="t" style="left:76.95px;top:533.8px;font-size:9.8px;line-height:13px;font-weight:normal;color:#a8adb4;letter-spacing:-0.04px;">Verantwortliche Person</span>
<span class="t" style="left:115.95px;top:557.5px;font-size:12.5px;line-height:16px;font-weight:normal;color:#2067b0;letter-spacing:-0.47px;">Emilia Schmidt</span>
<span class="t" style="left:115.95px;top:573.0px;font-size:9.6px;line-height:12px;font-weight:normal;color:#828b95;letter-spacing:0.11px;">Geschäftsführerin</span>
<span class="t" style="left:76.95px;top:605.0px;font-size:10.5px;line-height:14px;font-weight:normal;color:#828b95;letter-spacing:-0.20px;">Feld auswählen</span>
<span class="t" style="left:159.95px;top:605.0px;font-size:10.5px;line-height:14px;font-weight:normal;color:#828b95;letter-spacing:-0.08px;">Feld erstellen</span>
<span class="t" style="left:447.95px;top:605.0px;font-size:10.5px;line-height:14px;font-weight:normal;color:#828b95;letter-spacing:-0.05px;">Bereich löschen</span>
<span class="t" style="left:76.95px;top:654.8px;font-size:8.6px;line-height:11px;font-weight:normal;color:#535c69;letter-spacing:-0.23px;-webkit-text-stroke:.35px;">ERFORDERLICHE FELDER</span>
<span class="t" style="left:471.15px;top:653.0px;font-size:10.5px;line-height:14px;font-weight:normal;color:#b0b4b9;letter-spacing:0.13px;">bearbeiten</span>
<span class="t" style="left:601.95px;top:157.3px;font-size:11.3px;line-height:15px;font-weight:normal;color:#2067d8;letter-spacing:0.05px;">Aktivität</span>
<span class="t" style="left:657.45px;top:157.3px;font-size:11.3px;line-height:15px;font-weight:normal;color:#535c69;letter-spacing:-0.24px;">Kommentar</span>
<span class="t" style="left:729.95px;top:157.3px;font-size:11.3px;line-height:15px;font-weight:normal;color:#535c69;letter-spacing:-0.03px;">Nachricht</span>
<span class="t" style="left:793.45px;top:157.3px;font-size:11.3px;line-height:15px;font-weight:normal;color:#535c69;letter-spacing:-0.18px;">Aufgabe</span>
<span class="t" style="left:849.95px;top:157.3px;font-size:11.3px;line-height:15px;font-weight:normal;color:#535c69;letter-spacing:-0.10px;">E-Mail</span>
<span class="t" style="left:897.45px;top:157.3px;font-size:11.3px;line-height:15px;font-weight:normal;color:#535c69;letter-spacing:-0.10px;">Warten</span>
<span class="t" style="left:948.95px;top:157.3px;font-size:11.3px;line-height:15px;font-weight:normal;color:#535c69;letter-spacing:-0.30px;">Zoom</span>
<span class="t" style="left:992.45px;top:157.3px;font-size:11.3px;line-height:15px;font-weight:normal;color:#535c69;letter-spacing:-0.18px;">Termin</span>
<span class="t" style="left:1041.45px;top:157.3px;font-size:11.3px;line-height:15px;font-weight:normal;color:#535c69;letter-spacing:-0.13px;">Anruf</span>
<span class="t" style="left:1083.95px;top:157.3px;font-size:11.3px;line-height:15px;font-weight:normal;color:#535c69;letter-spacing:-0.25px;">Mehr</span>
<span class="t" style="left:604.95px;top:205.8px;font-size:12px;line-height:16px;font-weight:normal;color:#b3b8bd;letter-spacing:-0.16px;">Zu erledigen</span>
<span class="t" style="left:1117.65px;top:207.2px;font-size:9.6px;line-height:12px;font-weight:normal;color:#6a737f;letter-spacing:0.09px;">aktionen</span>
<span class="t" style="left:624.65px;top:264.3px;font-size:11.5px;line-height:15px;font-weight:normal;color:#424956;letter-spacing:-0.23px;">Im Chat besprechen</span>
<span class="t" style="left:857.45px;top:301.5px;font-size:9.6px;line-height:12px;font-weight:bold;color:#fff;letter-spacing:0.13px;">Zu erledigen</span>
<span class="t" style="left:620.75px;top:334.5px;font-size:12.4px;line-height:16px;font-weight:normal;color:#333;letter-spacing:-0.32px;">Fügen Sie eine neue Aktivität hinzu</span>
<span class="t" style="left:620.75px;top:350.4px;font-size:10.4px;line-height:14px;font-weight:normal;color:#b5bac0;letter-spacing:0.01px;">Planen Sie Ihre weiteren Schritte, um das Wichtige stets im Auge zu behalten</span>
<span class="t" style="left:872.95px;top:385.0px;font-size:9.6px;line-height:12px;font-weight:bold;color:#fff;letter-spacing:0.21px;">Heute</span>
<span class="t" style="left:1153.75px;top:386.3px;font-size:7.8px;line-height:10px;font-weight:bold;color:#a8adb4;letter-spacing:-0.06px;">FILTER</span>
<span class="t" style="left:594.45px;top:420.5px;font-size:10.4px;line-height:14px;font-weight:bold;color:#333;letter-spacing:-0.18px;">Dokument erstellt</span>
<span class="t" style="left:686.95px;top:421.0px;font-size:10.2px;line-height:13px;font-weight:normal;color:#c3c7cc;letter-spacing:-0.26px;">06:37</span>
<span class="t" style="left:667.95px;top:446.3px;font-size:10.5px;line-height:14px;font-weight:normal;color:#b9bec4;letter-spacing:-0.34px;">Name</span>
<span class="t" style="left:703.95px;top:445.7px;font-size:11.5px;line-height:15px;font-weight:normal;color:#333;letter-spacing:-0.20px;">Rechnung (Deutschland) 23</span>
<span class="t" style="left:667.95px;top:466.0px;font-size:10.5px;line-height:14px;font-weight:normal;color:#b9bec4;letter-spacing:-0.09px;">Ihr Unternehmen</span>
<span class="t" style="left:667.95px;top:480.2px;font-size:11.5px;line-height:15px;font-weight:normal;color:#333;letter-spacing:-0.13px;">Musterfirma, Steuernummer 987654321</span>
<span class="t" style="left:667.95px;top:500.2px;font-size:10.5px;line-height:14px;font-weight:normal;color:#b9bec4;letter-spacing:-0.34px;">Kunde</span>
<span class="t" style="left:667.95px;top:514.5px;font-size:11.5px;line-height:15px;font-weight:normal;color:#333;letter-spacing:-0.51px;">Leer</span>
<span class="t" style="left:625.85px;top:552.2px;font-size:8.4px;line-height:11px;font-weight:bold;color:#535c69;letter-spacing:-0.01px;">ÖFFNEN</span>
<span class="t" style="left:594.45px;top:600.3px;font-size:10.4px;line-height:14px;font-weight:bold;color:#a8adb4;letter-spacing:-0.14px;">CRM-Element erstellt</span>
<span class="t" style="left:704.45px;top:600.8px;font-size:10.2px;line-height:13px;font-weight:normal;color:#c3c7cc;letter-spacing:-0.13px;">06:37</span>
<span class="t" style="left:594.45px;top:619.5px;font-size:11.5px;line-height:15px;font-weight:normal;color:#333;letter-spacing:-0.20px;">Rechnung Nr.43</span>
<div class="rbar"></div>
<div class="rstrip"></div>
<!-- own avatar -->
<svg class="abs" style="left:1233.3px;top:9.8px;opacity:1.0" width="22.4" height="22.4" viewBox="0 0 24 24"><clipPath id="fc12342"><circle cx="12" cy="12" r="12"/></clipPath><g clip-path="url(#fc12342)"><rect width="24" height="24" fill="#4b2f20"/><path d="M17.500 0 h6.500 v10 h-3z" fill="#8aa83c"/><path d="M1 24 V11 C1 3 6.500 0 12.500 0 C19.500 0 23 5 22.500 12 V24z" fill="#4b2f20"/><path d="M6 24 c.5 -3 2.500 -4 6 -4 s5.500 1 6 4z" fill="#e2b096"/><ellipse cx="12.200" cy="13.300" rx="7.300" ry="9" fill="#f0cbb3"/><path d="M4 13 C3.500 5.500 8 2.500 13 3 C18.500 3.500 20.800 7.500 20.300 13.500 C19.200 10 17.500 7.500 14 6.800 C10 6.200 6 8 4 13z" fill="#4b2f20"/><ellipse cx="9.200" cy="12.600" rx="1.100" ry=".8" fill="#5b3a2a"/><ellipse cx="15.200" cy="12.600" rx="1.100" ry=".8" fill="#5b3a2a"/><path d="M7.800 11 q1.400 -.8 2.800 0 M13.800 11 q1.400 -.8 2.800 0" stroke="#6b4632" stroke-width=".5" fill="none"/><path d="M8.800 17 q3.400 1.400 6.800 0 q-3.400 3.600 -6.800 0z" fill="#fff"/><path d="M8.800 17 q3.400 3.600 6.800 0" fill="none" stroke="#c9806e" stroke-width=".6"/><ellipse cx="7.500" cy="15.500" rx="1.600" ry="1.100" fill="#e8a594" opacity=".6"/><ellipse cx="17" cy="15.500" rx="1.600" ry="1.100" fill="#e8a594" opacity=".6"/></g></svg>
<div class="abs" style="left:1231.500px;top:42px;width:19px;height:1px;background:rgba(255,255,255,.16)"></div>
<div class="rc" style="top:48.300px"></div>
<svg class="abs" style="left:1238px;top:53.500px" width="13" height="14" viewBox="0 0 13 14" fill="none" stroke="#fff" stroke-width="1.100" stroke-linecap="round" stroke-linejoin="round"><path d="M2.200 10.200 c1.100 -1.200 .9 -2.800 1 -4.600 a3.300 3.300 0 0 1 6.600 0 c.1 1.800 -.1 3.400 1 4.600z"/><path d="M5.300 12.200 a1.400 1.400 0 0 0 2.400 0 M6.500 1.200 v1"/></svg>
<div class="rc" style="top:80.300px"></div>
<svg class="abs" style="left:1237.500px;top:85.500px" width="14" height="14" viewBox="0 0 14 14" fill="none" stroke="#fff" stroke-width="1.100" stroke-linecap="round"><path d="M11.800 9.800 a5.600 5.600 0 1 1 .8 -2.800"/><path d="M10 9.400 a3.700 3.700 0 1 1 .6 -2.400"/><path d="M8.600 8 a1.800 1.800 0 1 1 .2 -1"/><path d="M7 7 l2.600 2.600"/></svg>
<div class="rc" style="top:112.300px"></div>
<svg class="abs" style="left:1237.500px;top:117.500px" width="14" height="14" viewBox="0 0 14 14" fill="none" stroke="#fff" stroke-width="1.100" stroke-linecap="round" stroke-linejoin="round"><path d="M10.400 11 a5.400 5.400 0 1 0 -2 1.200 l2.600 .6z"/><path d="M4.400 5.500 h4.800 m-1.200 -1.200 l1.200 1.200 l-1.200 1.200 M9.200 8.300 h-4.800 m1.200 -1.200 l-1.200 1.200 l1.200 1.200" stroke-width=".9"/></svg>
<div class="abs" style="left:1235.500px;top:151px;width:18.500px;height:1px;background:rgba(255,255,255,.15)"></div>
<!-- selected -->
<div class="abs" style="left:1225.500px;top:163.800px;width:38.300px;height:35.200px;border-radius:5px;background:rgba(255,255,255,.17)"></div>
<div class="abs" style="left:1232.300px;top:169px;width:24.400px;height:24.400px;border-radius:50%;background:#5b77a6"></div>
<svg class="abs" style="left:1232.3px;top:169.0px;opacity:0.5" width="24.4" height="24.4" viewBox="0 0 24 24"><clipPath id="fc12492"><circle cx="12" cy="12" r="12"/></clipPath><g clip-path="url(#fc12492)"><rect width="24" height="24" fill="#4b2f20"/><path d="M17.500 0 h6.500 v10 h-3z" fill="#8aa83c"/><path d="M1 24 V11 C1 3 6.500 0 12.500 0 C19.500 0 23 5 22.500 12 V24z" fill="#4b2f20"/><path d="M6 24 c.5 -3 2.500 -4 6 -4 s5.500 1 6 4z" fill="#e2b096"/><ellipse cx="12.200" cy="13.300" rx="7.300" ry="9" fill="#f0cbb3"/><path d="M4 13 C3.500 5.500 8 2.500 13 3 C18.500 3.500 20.800 7.500 20.300 13.500 C19.200 10 17.500 7.500 14 6.800 C10 6.200 6 8 4 13z" fill="#4b2f20"/><ellipse cx="9.200" cy="12.600" rx="1.100" ry=".8" fill="#5b3a2a"/><ellipse cx="15.200" cy="12.600" rx="1.100" ry=".8" fill="#5b3a2a"/><path d="M7.800 11 q1.400 -.8 2.800 0 M13.800 11 q1.400 -.8 2.800 0" stroke="#6b4632" stroke-width=".5" fill="none"/><path d="M8.800 17 q3.400 1.400 6.800 0 q-3.400 3.600 -6.800 0z" fill="#fff"/><path d="M8.800 17 q3.400 3.600 6.800 0" fill="none" stroke="#c9806e" stroke-width=".6"/><ellipse cx="7.500" cy="15.500" rx="1.600" ry="1.100" fill="#e8a594" opacity=".6"/><ellipse cx="17" cy="15.500" rx="1.600" ry="1.100" fill="#e8a594" opacity=".6"/></g></svg>
<div class="av" style="top:208.600px;background:radial-gradient(circle at 50% 40%,#2c8fd0,#2179c0)">
 <svg class="abs" style="left:3.800px;top:5.500px" width="18" height="15" viewBox="0 0 18 15"><path d="M7 4 h9.500 a1 1 0 0 1 1 1 v5.500 a1 1 0 0 1 -1 1 h-1 v2.300 l-2.800 -2.300 h-5.700 a1 1 0 0 1 -1 -1 v-5.500 a1 1 0 0 1 1 -1z" fill="#4f97d2"/><path d="M1.500 .8 h10.500 a1 1 0 0 1 1 1 v6 a1 1 0 0 1 -1 1 h-6.500 l-3 2.500 v-2.500 h-1 a1 1 0 0 1 -1 -1 v-6 a1 1 0 0 1 1 -1z" fill="#5f9fd0"/><path d="M2.800 3.200 h6 M2.800 5.400 h6" stroke="#7fb05a" stroke-width="1"/></svg>
</div>
<div class="av" style="top:244.100px;background:#278b6e;color:#93c2b8">LC</div>
<div class="av" style="top:279.200px;background:radial-gradient(ellipse 30% 42% at 47% 62%,#8c4560 0,#6f3d68 55%,rgba(40,55,140,0) 100%),radial-gradient(circle at 25% 45%,#2f62b5 0,#1b3a8a 35%,#17307a 100%);box-shadow:inset 0 0 0 1px rgba(170,160,230,.75), inset 0 0 0 2px #0b2f78">
</div>
<div class="abs" style="left:1238.0px;top:312.5px;width:13px;height:13px;border-radius:50%;background:#6f7fa3"></div><svg class="abs" style="left:1238.0px;top:312.5px;opacity:0.45" width="13.0" height="13.0" viewBox="0 0 24 24"><clipPath id="fc12692"><circle cx="12" cy="12" r="12"/></clipPath><g clip-path="url(#fc12692)"><rect width="24" height="24" fill="#4b2f20"/><path d="M17.500 0 h6.500 v10 h-3z" fill="#8aa83c"/><path d="M1 24 V11 C1 3 6.500 0 12.500 0 C19.500 0 23 5 22.500 12 V24z" fill="#4b2f20"/><path d="M6 24 c.5 -3 2.500 -4 6 -4 s5.500 1 6 4z" fill="#e2b096"/><ellipse cx="12.200" cy="13.300" rx="7.300" ry="9" fill="#f0cbb3"/><path d="M4 13 C3.500 5.500 8 2.500 13 3 C18.500 3.500 20.800 7.500 20.300 13.500 C19.200 10 17.500 7.500 14 6.800 C10 6.200 6 8 4 13z" fill="#4b2f20"/><ellipse cx="9.200" cy="12.600" rx="1.100" ry=".8" fill="#5b3a2a"/><ellipse cx="15.200" cy="12.600" rx="1.100" ry=".8" fill="#5b3a2a"/><path d="M7.800 11 q1.400 -.8 2.800 0 M13.800 11 q1.400 -.8 2.800 0" stroke="#6b4632" stroke-width=".5" fill="none"/><path d="M8.800 17 q3.400 1.400 6.800 0 q-3.400 3.600 -6.800 0z" fill="#fff"/><path d="M8.800 17 q3.400 3.600 6.800 0" fill="none" stroke="#c9806e" stroke-width=".6"/><ellipse cx="7.500" cy="15.500" rx="1.600" ry="1.100" fill="#e8a594" opacity=".6"/><ellipse cx="17" cy="15.500" rx="1.600" ry="1.100" fill="#e8a594" opacity=".6"/></g></svg>
<div class="abs" style="left:1231.5px;top:324.5px;width:13px;height:13px;border-radius:50%;background:#6f7fa3"></div><svg class="abs" style="left:1231.5px;top:324.5px;opacity:0.45" width="13.0" height="13.0" viewBox="0 0 24 24"><clipPath id="fc12639"><circle cx="12" cy="12" r="12"/></clipPath><g clip-path="url(#fc12639)"><rect width="24" height="24" fill="#4b2f20"/><path d="M17.500 0 h6.500 v10 h-3z" fill="#8aa83c"/><path d="M1 24 V11 C1 3 6.500 0 12.500 0 C19.500 0 23 5 22.500 12 V24z" fill="#4b2f20"/><path d="M6 24 c.5 -3 2.500 -4 6 -4 s5.500 1 6 4z" fill="#e2b096"/><ellipse cx="12.200" cy="13.300" rx="7.300" ry="9" fill="#f0cbb3"/><path d="M4 13 C3.500 5.500 8 2.500 13 3 C18.500 3.500 20.800 7.500 20.300 13.500 C19.200 10 17.500 7.500 14 6.800 C10 6.200 6 8 4 13z" fill="#4b2f20"/><ellipse cx="9.200" cy="12.600" rx="1.100" ry=".8" fill="#5b3a2a"/><ellipse cx="15.200" cy="12.600" rx="1.100" ry=".8" fill="#5b3a2a"/><path d="M7.800 11 q1.400 -.8 2.800 0 M13.800 11 q1.400 -.8 2.800 0" stroke="#6b4632" stroke-width=".5" fill="none"/><path d="M8.800 17 q3.400 1.400 6.800 0 q-3.400 3.600 -6.800 0z" fill="#fff"/><path d="M8.800 17 q3.400 3.600 6.800 0" fill="none" stroke="#c9806e" stroke-width=".6"/><ellipse cx="7.500" cy="15.500" rx="1.600" ry="1.100" fill="#e8a594" opacity=".6"/><ellipse cx="17" cy="15.500" rx="1.600" ry="1.100" fill="#e8a594" opacity=".6"/></g></svg>
<div class="abs" style="left:1244.8px;top:324.5px;width:13px;height:13px;border-radius:50%;background:#6f7fa3"></div><svg class="abs" style="left:1244.8px;top:324.5px;opacity:0.45" width="13.0" height="13.0" viewBox="0 0 24 24"><clipPath id="fc12772"><circle cx="12" cy="12" r="12"/></clipPath><g clip-path="url(#fc12772)"><rect width="24" height="24" fill="#4b2f20"/><path d="M17.500 0 h6.500 v10 h-3z" fill="#8aa83c"/><path d="M1 24 V11 C1 3 6.500 0 12.500 0 C19.500 0 23 5 22.500 12 V24z" fill="#4b2f20"/><path d="M6 24 c.5 -3 2.500 -4 6 -4 s5.500 1 6 4z" fill="#e2b096"/><ellipse cx="12.200" cy="13.300" rx="7.300" ry="9" fill="#f0cbb3"/><path d="M4 13 C3.500 5.500 8 2.500 13 3 C18.500 3.500 20.800 7.500 20.300 13.500 C19.200 10 17.500 7.500 14 6.800 C10 6.200 6 8 4 13z" fill="#4b2f20"/><ellipse cx="9.200" cy="12.600" rx="1.100" ry=".8" fill="#5b3a2a"/><ellipse cx="15.200" cy="12.600" rx="1.100" ry=".8" fill="#5b3a2a"/><path d="M7.800 11 q1.400 -.8 2.800 0 M13.800 11 q1.400 -.8 2.800 0" stroke="#6b4632" stroke-width=".5" fill="none"/><path d="M8.800 17 q3.400 1.400 6.800 0 q-3.400 3.600 -6.800 0z" fill="#fff"/><path d="M8.800 17 q3.400 3.600 6.800 0" fill="none" stroke="#c9806e" stroke-width=".6"/><ellipse cx="7.500" cy="15.500" rx="1.600" ry="1.100" fill="#e8a594" opacity=".6"/><ellipse cx="17" cy="15.500" rx="1.600" ry="1.100" fill="#e8a594" opacity=".6"/></g></svg>
<div class="av" style="top:350.100px;background:#2a7d67">
 <div class="abs" style="left:6.800px;top:6.300px;width:11px;height:11.500px;border-radius:1.500px;background:#8497bd"></div>
 <div class="abs" style="left:8.300px;top:7.800px;width:8px;height:6px;background:#2f6f78"></div>
 <svg class="abs" style="left:8.800px;top:8px" width="7" height="6" viewBox="0 0 7 6" fill="none" stroke="#c6d3e6" stroke-width="1.200"><path d="M1 3 l1.800 1.800 l3 -3.600"/></svg>
</div>
<svg class="abs" style="left:1231.500px;top:384.900px" width="26" height="26" viewBox="0 0 26 26"><path d="M13 .6 L23.800 6.800 V19.200 L13 25.400 L2.200 19.200 V6.800z" fill="#0f6f68"/><path d="M13 1.800 L22.700 7.400 V18.600 L13 24.200 L3.300 18.600 V7.400z" fill="#053c6d"/><path d="M13 3 L21.700 8 V18 L13 23 L4.300 18 V8z" fill="#178a6e"/></svg>
<div class="av" style="top:385.600px;background:none;color:#8fc4b6">OF</div>
<svg class="abs" style="left:1231.500px;top:420.400px" width="26" height="26" viewBox="0 0 26 26"><path d="M13 .6 L23.800 6.800 V19.200 L13 25.400 L2.200 19.200 V6.800z" fill="#0f6f68"/><path d="M13 1.800 L22.700 7.400 V18.600 L13 24.200 L3.300 18.600 V7.400z" fill="#04376a"/><path d="M13 3 L21.700 8 V18 L13 23 L4.300 18 V8z" fill="#178a6e"/></svg>
<div class="av" style="top:421.100px;background:none;color:#8fc4b6">PC</div>
<div class="av" style="top:455.600px;background:#823d66;color:#b98dab">DW</div>
<div class="av" style="top:491.700px;background:#4f507a;color:#9c9ebe">BC</div>
<div class="av" style="top:526.700px;background:#5150ac"></div>
<svg class="abs" style="left:1236.700px;top:531.600px" width="16.500" height="16.500" viewBox="0 0 15 15" fill="none" stroke="#d5d8f0" stroke-width="1.100" stroke-linecap="round"><path d="M3 2.500 l2 -.8 l1.500 3 l-1.200 1.200 c.7 1.600 1.800 2.700 3.400 3.400 l1.200 -1.200 l3 1.500 l-.8 2 c-4.900 .7 -9.800 -4.200 -9.100 -9.100z" fill="#d5d8f0" stroke="none"/><path d="M9 1.800 a4.500 4.500 0 0 1 4 4 M9.200 4 a2.300 2.300 0 0 1 1.700 1.700"/></svg>
<div class="av" style="top:562px;background:#6e49bf;box-shadow:inset 0 0 0 1px rgba(215,205,250,.62), inset 0 0 0 2.200px #1c1f6c"></div>
<svg class="abs" style="left:1238.800px;top:568.600px" width="11.500" height="11.500" viewBox="0 0 14 14" fill="none" stroke="#b9a6ea" stroke-width="1.400" stroke-linecap="round"><path d="M11.800 9.800 a5.600 5.600 0 1 1 .8 -2.800"/><path d="M9.600 8.600 a3 3 0 1 1 .4 -1.600"/><path d="M7 7 l2.600 2.600"/></svg>
<div class="av" style="top:597.200px;background:#277b7b"></div>
<svg class="abs" style="left:1236.700px;top:602.100px" width="16.500" height="16.500" viewBox="0 0 15 15" fill="none" stroke="#cfe3e3" stroke-width="1.100" stroke-linecap="round"><path d="M3 2.500 l2 -.8 l1.500 3 l-1.200 1.200 c.7 1.600 1.800 2.700 3.400 3.400 l1.200 -1.200 l3 1.500 l-.8 2 c-4.900 .7 -9.800 -4.200 -9.100 -9.100z" fill="#cfe3e3" stroke="none"/><path d="M9 1.800 a4.500 4.500 0 0 1 4 4 M9.200 4 a2.300 2.300 0 0 1 1.700 1.700"/></svg>
<div class="av" style="top:632px;background:#2d4f86">
 <div class="abs" style="left:5.500px;top:5px;width:13.500px;height:12.500px;border-radius:45%;background:#8f9bb8"></div>
 <div class="abs" style="left:5px;top:2px;width:5px;height:6px;border-radius:2px 60% 0 0;background:#8490ae"></div>
 <div class="abs" style="left:14.500px;top:2px;width:5px;height:6px;border-radius:60% 2px 0 0;background:#8490ae"></div>
 <div class="abs" style="left:7px;top:10px;width:10.500px;height:2.500px;background:#39415f;border-radius:1.500px"></div>
 <div class="abs" style="left:9.500px;top:13px;width:5.500px;height:3.500px;background:#b9c1d3;border-radius:40%"></div>
 <div class="abs" style="left:6.500px;top:18px;width:11.500px;height:8px;background:#46557f;border-radius:3px 3px 0 0"></div>
 <div class="abs" style="left:11px;top:18px;width:2.500px;height:8px;background:#a9b3c9"></div>
</div>
<div class="av" style="top:665.500px;background:#4a3f8f"></div>
</body>
</html>
